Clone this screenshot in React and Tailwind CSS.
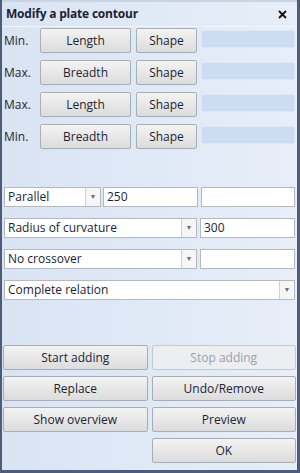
const font = { fontFamily: "'Open Sans', 'Noto Sans', sans-serif" };

function Btn({ children, className = '', disabled = false }) {
    return (
        <button
            className={`h-[25px] rounded-[2px] border text-[12px] leading-none ${
                disabled
                    ? 'border-[#c4c8cf] bg-[#eceef1] text-[#9aa0aa]'
                    : 'border-[#a8adb5] bg-gradient-to-b from-[#f3f3f3] to-[#dcdcdc] text-[#1d2436]'
            } ${className}`}
        >
            {children}
        </button>
    );
}

function Arrow() {
    return (
        <div className="w-[15px] h-full border-l border-[#cfd3d9] bg-[#f6f6f6] flex items-center justify-center">
            <span className="text-[7px] text-[#6b6f77]">▼</span>
        </div>
    );
}

function Combo({ label, className = '' }) {
    return (
        <div className={`h-[20px] bg-white border border-[#b4b9c1] flex items-stretch ${className}`}>
            <div className="flex-1 px-[3px] flex items-center text-[12px] text-[#1d2436] truncate">{label}</div>
            <Arrow />
        </div>
    );
}

function Field({ value = '', className = '' }) {
    return (
        <div className={`h-[20px] bg-white border border-[#b4b9c1] px-[3px] flex items-center text-[12px] text-[#1d2436] ${className}`}>
            {value}
        </div>
    );
}

const limits = [
    ['Min.', 'Length'],
    ['Max.', 'Breadth'],
    ['Max.', 'Length'],
    ['Min.', 'Breadth'],
];

export default function App() {
    return (
        <div
            className="w-[300px] h-[473px] flex flex-col border-l-2 border-r-[3px] border-b-[3px] border-[#4e5c7a] bg-gradient-to-r from-[#d9e4f3] to-[#e7eef9]"
            style={font}
        >
            <div className="h-[27px] shrink-0 flex items-center justify-between pl-[4px] pr-[10px] border-t-2 border-[#c9d3e2] border-b border-b-[#f2f6fc]">
                <span className="text-[12px] font-bold text-[#1b2235] tracking-[-0.2px]">Modify a plate contour</span>
                <svg width="9" height="9" viewBox="0 0 9 9">
                    <path d="M1 1 L8 8 M8 1 L1 8" stroke="#111" strokeWidth="1.8" />
                </svg>
            </div>

            <div className="flex flex-col gap-[7px] pt-[1px] pr-[2px]">
                {limits.map(([lim, dim], i) => (
                    <div key={i} className="flex items-start h-[25px]">
                        <span className="w-[38px] pl-[2px] pt-[4px] text-[12px] text-[#1d2436]">{lim}</span>
                        <Btn className="w-[91px]">{dim}</Btn>
                        <Btn className="w-[61px] ml-[5px]">Shape</Btn>
                        <div className="ml-[4px] mt-[2px] h-[18px] flex-1 bg-[#cddcf0] border border-[#dfe8f5]" />
                    </div>
                ))}
            </div>

            <div className="flex flex-col gap-[11px] mt-[38px] pl-[2px] pr-[2px]">
                <div className="flex gap-[2px]">
                    <Combo label="Parallel" className="w-[97px]" />
                    <Field value="250" className="w-[95px]" />
                    <Field className="flex-1 ml-[1px]" />
                </div>
                <div className="flex gap-[3px]">
                    <Combo label="Radius of curvature" className="w-[193px]" />
                    <Field value="300" className="flex-1" />
                </div>
                <div className="flex gap-[3px]">
                    <Combo label="No crossover" className="w-[193px]" />
                    <Field className="flex-1" />
                </div>
                <Combo label="Complete relation" />
            </div>

            <div className="mt-auto mb-[7px] grid grid-cols-2 gap-x-[4px] gap-y-[6px] pl-[1px] pr-[1px]">
                <Btn>Start adding</Btn>
                <Btn disabled>Stop adding</Btn>
                <Btn>Replace</Btn>
                <Btn>Undo/Remove</Btn>
                <Btn>Show overview</Btn>
                <Btn>Preview</Btn>
                <div />
                <Btn>OK</Btn>
            </div>
        </div>
    );
}
